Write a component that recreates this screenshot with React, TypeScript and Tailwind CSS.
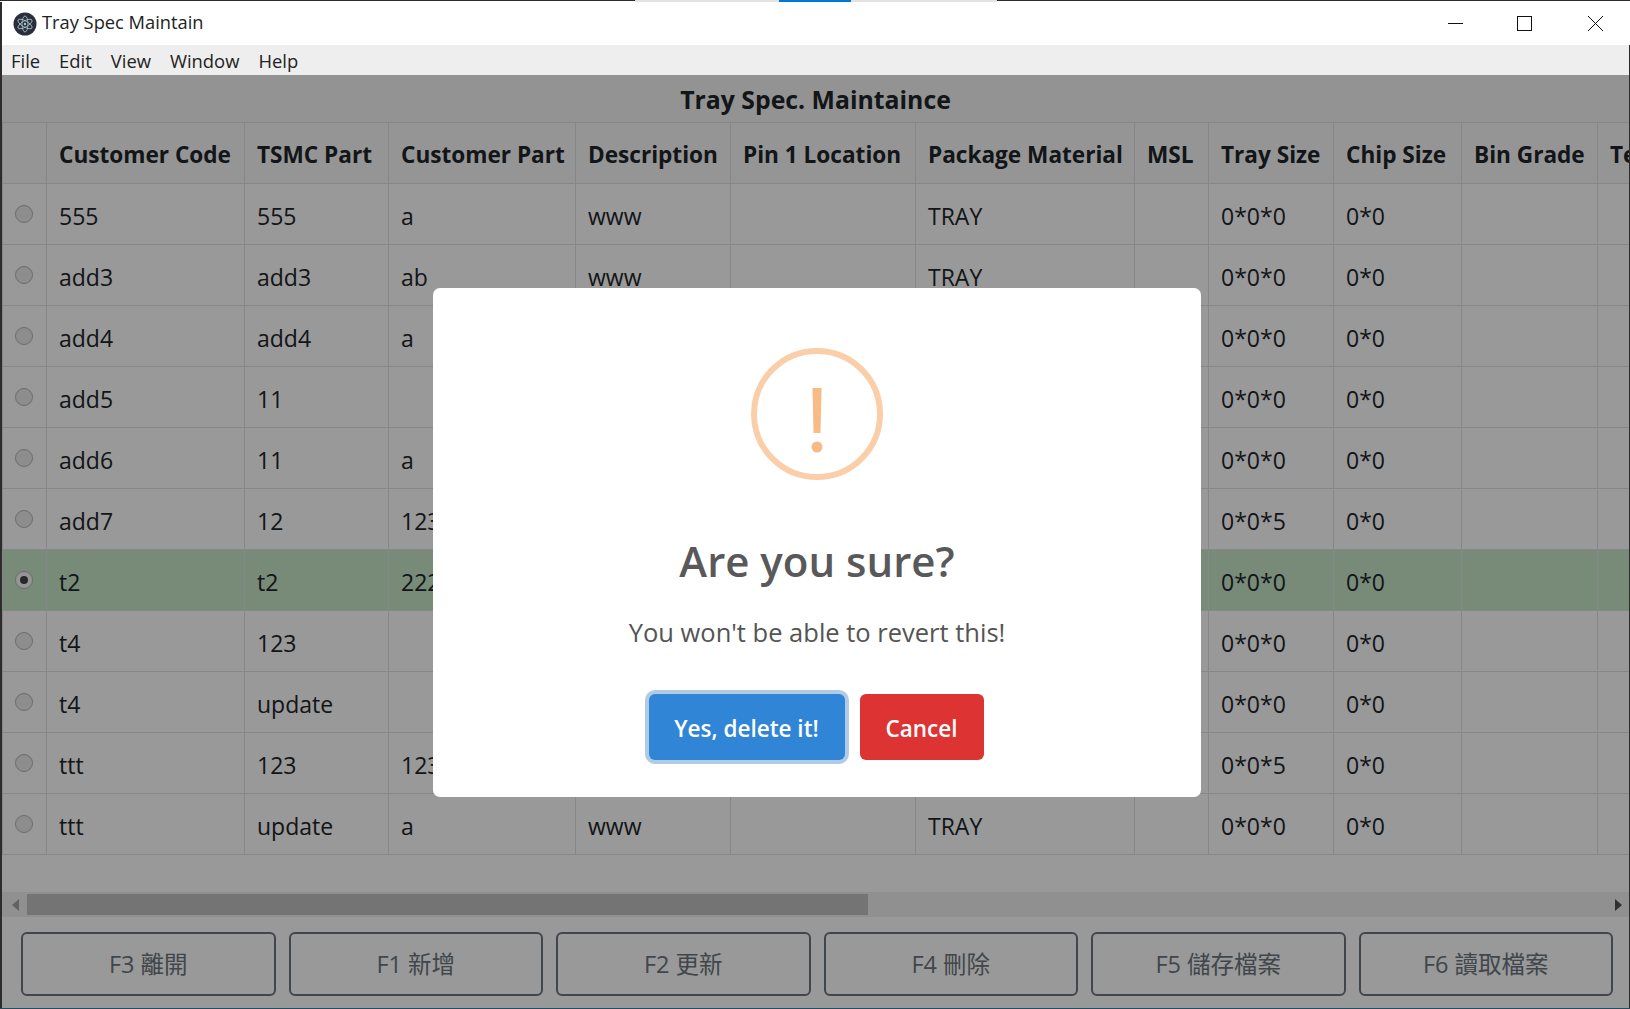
const font = "[font-family:'Open_Sans','Noto_Sans_CJK_TC',sans-serif]";

const columns = [
  { label: "", cls: "w-[44px]" },
  { label: "Customer Code", cls: "w-[198px]" },
  { label: "TSMC Part", cls: "w-[144px]" },
  { label: "Customer Part", cls: "w-[187px]" },
  { label: "Description", cls: "w-[155px]" },
  { label: "Pin 1 Location", cls: "w-[185px]" },
  { label: "Package Material", cls: "w-[219px]" },
  { label: "MSL", cls: "w-[74px]" },
  { label: "Tray Size", cls: "w-[125px]" },
  { label: "Chip Size", cls: "w-[128px]" },
  { label: "Bin Grade", cls: "w-[136px]" },
  { label: "Te", cls: "w-[120px]" },
];

const rows = [
  ["555", "555", "a", "www", "", "TRAY", "", "0*0*0", "0*0", "", ""],
  ["add3", "add3", "ab", "www", "", "TRAY", "", "0*0*0", "0*0", "", ""],
  ["add4", "add4", "a", "www", "", "TRAY", "", "0*0*0", "0*0", "", ""],
  ["add5", "11", "", "www", "", "TRAY", "", "0*0*0", "0*0", "", ""],
  ["add6", "11", "a", "www", "", "TRAY", "", "0*0*0", "0*0", "", ""],
  ["add7", "12", "123", "www", "", "TRAY", "", "0*0*5", "0*0", "", ""],
  ["t2", "t2", "222", "www", "", "TRAY", "", "0*0*0", "0*0", "", ""],
  ["t4", "123", "", "www", "", "TRAY", "", "0*0*0", "0*0", "", ""],
  ["t4", "update", "", "www", "", "TRAY", "", "0*0*0", "0*0", "", ""],
  ["ttt", "123", "123", "www", "", "TRAY", "", "0*0*5", "0*0", "", ""],
  ["ttt", "update", "a", "www", "", "TRAY", "", "0*0*0", "0*0", "", ""],
];

const actions = ["F3 離開", "F1 新增", "F2 更新", "F4 刪除", "F5 儲存檔案", "F6 讀取檔案"];

function AppIcon() {
  return (
    <svg width="24" height="24" viewBox="0 0 24 24" fill="none">
      <circle cx="12" cy="12" r="11.5" fill="#2b2e3a" />
      <g stroke="#a9c6d2" strokeWidth="0.8" fill="none">
        <ellipse cx="12" cy="12" rx="8" ry="3" transform="rotate(30 12 12)" />
        <ellipse cx="12" cy="12" rx="8" ry="3" transform="rotate(90 12 12)" />
        <ellipse cx="12" cy="12" rx="8" ry="3" transform="rotate(150 12 12)" />
      </g>
      <circle cx="12" cy="12" r="1.2" fill="#a9c6d2" />
    </svg>
  );
}

function Radio({ checked }: { checked: boolean }) {
  return (
    <span className={`mx-auto flex h-[18px] w-[18px] items-center justify-center rounded-full border border-[#b4b4b4] ${checked ? "bg-[#fafafa]" : "bg-[#ececec]"}`}>
      {checked && <span className="h-[8px] w-[8px] rounded-full bg-[#444]" />}
    </span>
  );
}

function WindowControls() {
  return (
    <div className="flex h-full">
      <div className="flex w-[65px] items-center justify-center">
        <svg width="15" height="15" viewBox="0 0 15 15"><path d="M0 7.5H15" stroke="#111" /></svg>
      </div>
      <div className="flex w-[73px] items-center justify-center">
        <svg width="15" height="15" viewBox="0 0 15 15"><rect x="0.5" y="0.5" width="14" height="14" fill="none" stroke="#111" /></svg>
      </div>
      <div className="flex w-[69px] items-center justify-center">
        <svg width="15" height="15" viewBox="0 0 15 15"><path d="M0 0L15 15M15 0L0 15" stroke="#111" /></svg>
      </div>
    </div>
  );
}

function ConfirmDialog() {
  return (
    <div className="absolute inset-0 flex items-start justify-center bg-black/40 pl-[3px]">
      <div className="mt-[213px] flex h-[509px] w-[768px] flex-col items-center rounded-[7px] bg-white">
        <svg className="mt-[60px]" width="132" height="132" viewBox="0 0 132 132" fill="none">
          <circle cx="66" cy="66" r="63" stroke="#facea8" strokeWidth="6" />
          <path d="M61.5 40H70.5L69.5 85H62.5Z" fill="#f8bb86" />
          <circle cx="66" cy="99" r="5.5" fill="#f8bb86" />
        </svg>
        <h2 className="mt-[54px] text-[42px] leading-[54px] font-semibold text-[#595959]">Are you sure?</h2>
        <p className="mt-[24px] text-[25.5px] leading-[40px] text-[#545454]">You won't be able to revert this!</p>
        <div className="mt-[42px] mr-[2px] flex gap-[15px]">
          <button className="h-[66px] w-[196px] rounded-[6px] bg-[#3085d6] pt-[3px] text-[22.5px] font-semibold text-white ring-[4px] ring-[#b0cbe6]">Yes, delete it!</button>
          <button className="h-[66px] w-[124px] rounded-[6px] bg-[#dd3333] pt-[3px] text-[22.5px] font-semibold text-white">Cancel</button>
        </div>
      </div>
    </div>
  );
}

export default function App() {
  return (
    <div className={`flex h-[1009px] w-[1630px] flex-col overflow-hidden bg-[#2c2c2c] pl-[2px] text-[#212529] ${font}`}>
      <div className="-ml-[2px] flex h-[2px] shrink-0 bg-white">
        <div className="h-[1px] w-[635px] bg-[#2c2c2c]" />
        <div className="h-[2px] w-[144px] bg-[#e2e2e2]" />
        <div className="h-[2px] w-[72px] bg-[#0078d7]" />
        <div className="h-[2px] w-[146px] bg-[#e2e2e2]" />
        <div className="h-[1px] flex-1 bg-[#2c2c2c]" />
      </div>
      <header className="flex h-[43px] shrink-0 items-center justify-between bg-white pl-[11px] text-[18.3px] text-[#222]">
        <div className="flex items-center gap-[5px]">
          <AppIcon />
          <span className="pb-[3px]">Tray Spec Maintain</span>
        </div>
        <WindowControls />
      </header>
      <nav className="mr-[1px] flex h-[30px] shrink-0 items-center gap-[19px] bg-[#eeeeee] pt-[1px] pl-[9px] text-[18.4px] text-[#222]">
        <span>File</span>
        <span>Edit</span>
        <span>View</span>
        <span>Window</span>
        <span>Help</span>
      </nav>
      <div className="relative mr-[1px] flex min-h-0 flex-1 flex-col bg-white">
        <h1 className="flex h-[47px] shrink-0 items-center justify-center bg-[#f5f5f5] pt-[2px] text-[24.8px] font-bold">Tray Spec. Maintaince</h1>
        <div className="h-[733px] shrink-0 overflow-hidden">
          <table className="w-[1715px] table-fixed border-collapse">
            <colgroup>
              {columns.map((c) => (
                <col key={c.label} className={c.cls} />
              ))}
            </colgroup>
            <thead>
              <tr className="h-[61px] bg-[#f8f8f8]">
                {columns.map((c) => (
                  <th key={c.label} className="border border-[#dee2e6] px-[12px] pt-[3px] text-left text-[22.6px] font-bold whitespace-nowrap">{c.label}</th>
                ))}
              </tr>
            </thead>
            <tbody>
              {rows.map((row, i) => (
                <tr key={i} className={i === 6 ? "h-[61px] bg-[#c8e6c9]" : "h-[61px]"}>
                  <td className="border border-[#dee2e6] pr-[1px]"><Radio checked={i === 6} /></td>
                  {row.map((cell, j) => (
                    <td key={j} className="border border-[#dee2e6] px-[12px] pt-[4px] text-[23px] whitespace-nowrap">{cell}</td>
                  ))}
                </tr>
              ))}
            </tbody>
          </table>
        </div>
        <div className="mt-[37px] flex h-[25px] shrink-0 items-center bg-[#f1f1f1]">
          <svg className="mr-[8px] ml-[9px]" width="8" height="12" viewBox="0 0 8 12"><path d="M8 0V12L1 6Z" fill="#a3a3a3" /></svg>
          <div className="h-[21px] w-[841px] bg-[#c1c1c1]" />
          <div className="flex-1" />
          <svg className="mx-[6px]" width="8" height="12" viewBox="0 0 8 12"><path d="M0 0V12L7 6Z" fill="#505050" /></svg>
        </div>
        <div className="mt-[15px] flex gap-[13px] pr-[16px] pl-[19px]">
          {actions.map((a) => (
            <button key={a} className="h-[64px] flex-1 rounded-[6px] border-2 border-[#6c757d] pt-[2px] text-[23.5px] text-[#6c757d]">{a}</button>
          ))}
        </div>
        <ConfirmDialog />
      </div>
      <div className="-ml-[2px] h-[1px] shrink-0 bg-[#1d4f66]" />
    </div>
  );
}
